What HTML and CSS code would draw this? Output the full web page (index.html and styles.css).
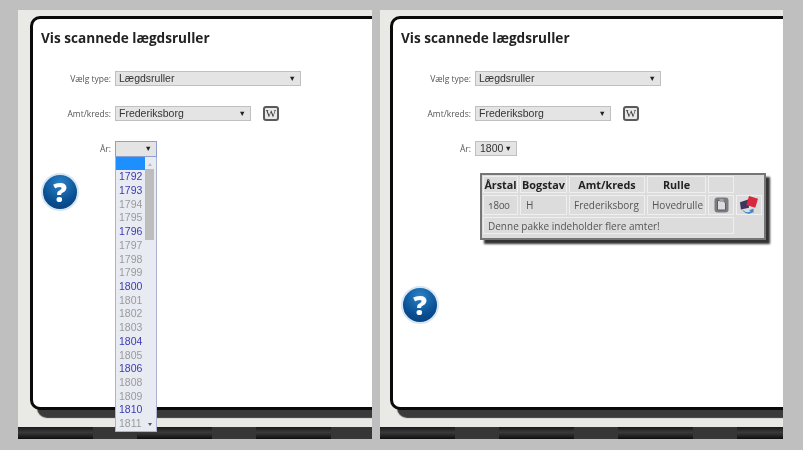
FILE: index.html
```html
<!DOCTYPE html>
<html lang="da">
<head>
    <meta charset="UTF-8">
    <meta name="viewport" content="width=device-width, initial-scale=1.0">
    <title>Vis scannede lægdsruller</title>
    <link rel="stylesheet" href="styles.css">
</head>
<body>
    <div class="panel panel-left">
        <div class="card">
            <h1>Vis scannede lægdsruller</h1>
            <div class="form-row">
                <label>Vælg type:</label>
                <div class="select select-type">Lægdsruller<span class="arrow">▼</span></div>
            </div>
            <div class="form-row">
                <label>Amt/kreds:</label>
                <div class="select select-amt">Frederiksborg<span class="arrow">▼</span></div>
                <span class="wiki">W</span>
            </div>
            <div class="form-row">
                <label>År:</label>
                <div class="select select-year open">
                    <span class="arrow">▼</span>
                    <div class="year-list">
                        <div class="years">
                            <div class="year selected">&nbsp;</div>
                            <div class="year has">1792</div>
                            <div class="year has">1793</div>
                            <div class="year">1794</div>
                            <div class="year">1795</div>
                            <div class="year has">1796</div>
                            <div class="year">1797</div>
                            <div class="year">1798</div>
                            <div class="year">1799</div>
                            <div class="year has">1800</div>
                            <div class="year">1801</div>
                            <div class="year">1802</div>
                            <div class="year">1803</div>
                            <div class="year has">1804</div>
                            <div class="year">1805</div>
                            <div class="year has">1806</div>
                            <div class="year">1808</div>
                            <div class="year">1809</div>
                            <div class="year has">1810</div>
                            <div class="year">1811</div>
                        </div>
                        <div class="scrollbar">
                            <span class="scroll-up"></span>
                            <span class="scroll-thumb"></span>
                            <span class="scroll-down"></span>
                        </div>
                    </div>
                </div>
            </div>
            <div class="help help-left">?</div>
        </div>
        <div class="footer"></div>
    </div>

    <div class="panel panel-right">
        <div class="card">
            <h1>Vis scannede lægdsruller</h1>
            <div class="form-row">
                <label>Vælg type:</label>
                <div class="select select-type">Lægdsruller<span class="arrow">▼</span></div>
            </div>
            <div class="form-row">
                <label>Amt/kreds:</label>
                <div class="select select-amt">Frederiksborg<span class="arrow">▼</span></div>
                <span class="wiki">W</span>
            </div>
            <div class="form-row">
                <label>År:</label>
                <div class="select select-year">1800<span class="arrow">▼</span></div>
            </div>
            <div class="result">
                <table>
                    <tr>
                        <th class="col-year">Årstal</th>
                        <th class="col-letter">Bogstav</th>
                        <th class="col-amt">Amt/kreds</th>
                        <th class="col-roll">Rulle</th>
                        <th class="col-doc"></th>
                        <th class="col-pack"></th>
                    </tr>
                    <tr>
                        <td class="oldstyle">1800</td>
                        <td class="letter">H</td>
                        <td>Frederiksborg</td>
                        <td class="roll">Hovedrulle</td>
                        <td class="icon-cell">
                            <svg width="15" height="16" viewBox="0 0 15 16">
                                <rect x="0.5" y="0.5" width="14" height="15" rx="3" fill="#7b7b80"/>
                                <path d="M3.5 3.5h5.5l2.5 2.5v7h-8z" fill="#dcdce0" stroke="#5c5c62"/>
                                <path d="M5.5 2h4v3h-4z" fill="#a4a4a8"/>
                            </svg>
                        </td>
                        <td class="icon-cell">
                            <svg width="20" height="18" viewBox="0 0 22 20">
                                <path d="M1 7l9-3 1 9-9 2z" fill="#3c3560"/>
                                <path d="M11 0l10 3-3 10-10-3z" fill="#d8283c"/>
                                <path d="M3 14c2 4 7 5 10 3l-2-1 5-2 0 5-1-1c-4 3-10 2-12-4z" fill="#3f86c8"/>
                            </svg>
                        </td>
                    </tr>
                    <tr>
                        <td class="note" colspan="5">Denne pakke indeholder flere amter!</td>
                    </tr>
                </table>
            </div>
            <div class="help">?</div>
        </div>
        <div class="footer"></div>
    </div>
</body>
</html>
```

FILE: styles.css
```css
body {
    margin: 0;
    padding: 10px 18px;
    height: 450px;
    box-sizing: border-box;
    overflow: hidden;
    background-color: #bfbfbf;
    font-family: "Open Sans", sans-serif;
    display: flex;
    gap: 8px;
}
.panel {
    height: 429px;
    box-sizing: border-box;
    padding-top: 6px;
    background-color: #e9e9e5;
    overflow: hidden;
    display: flex;
    flex-direction: column;
    filter: blur(0.35px);
}
.panel-left {
    width: 354px;
    padding-left: 12px;
}
.panel-right {
    width: 403px;
    padding-left: 10px;
}
.card {
    height: 394px;
    flex: none;
    margin-right: -30px;
    box-sizing: border-box;
    padding: 8px 0 0 8px;
    background-color: white;
    border: 3px solid #0a0a0a;
    border-radius: 10px;
    box-shadow: 7px 8px 1px #3a3a3a;
}
h1 {
    margin: 0 0 22px;
    font-size: 13.6px;
    line-height: 22px;
    font-weight: 700;
    color: #222;
}
.form-row {
    display: flex;
    align-items: center;
    height: 15px;
    margin-bottom: 20px;
    margin-left: -8px;
}
label {
    width: 78px;
    margin-right: 4px;
    text-align: right;
    font-size: 8.5px;
    color: #555;
}
.select {
    position: relative;
    height: 15px;
    box-sizing: border-box;
    padding: 0 4px 0 3px;
    background-color: #e4e4e4;
    border: 1px solid #c0c0c0;
    font-family: "Liberation Sans", sans-serif;
    font-size: 10.5px;
    line-height: 13px;
    color: #333;
    display: flex;
    justify-content: space-between;
    align-items: center;
}
.select-type {
    width: 186px;
}
.select-amt {
    width: 136px;
}
.select-year {
    width: 42px;
    padding-left: 4px;
}
.select-year.open {
    height: 16px;
    justify-content: flex-end;
    border-color: #8d9fd0;
}
.arrow {
    font-size: 7.5px;
    color: #222;
}
.wiki {
    width: 16px;
    height: 15px;
    margin-left: 12px;
    box-sizing: border-box;
    border: 2px solid #5a5a5a;
    border-radius: 3px;
    background-color: #e8e8e8;
    font-family: "Liberation Serif", serif;
    font-size: 11px;
    line-height: 11px;
    text-align: center;
    color: #333;
}
.year-list {
    position: absolute;
    top: 15px;
    left: -1px;
    width: 42px;
    height: 275px;
    box-sizing: border-box;
    background-color: #e9ebf3;
    border: 1px solid #aab2cc;
    border-top: none;
    display: flex;
    z-index: 2;
}
.years {
    width: 29px;
    flex: none;
}
.year {
    height: 13.72px;
    line-height: 13.72px;
    padding-left: 3px;
    font-size: 10.5px;
    color: #9a9a9a;
}
.year.has {
    color: #3b3bb0;
}
.year.selected {
    background-color: #1e8fff;
}
.scrollbar {
    flex: 1;
    position: relative;
    margin-right: 2px;
}
.scroll-up, .scroll-down {
    position: absolute;
    left: 3px;
    border-left: 2.5px solid transparent;
    border-right: 2.5px solid transparent;
}
.scroll-up {
    top: 6px;
    border-bottom: 3px solid #bbb;
}
.scroll-down {
    bottom: 5px;
    border-top: 3px solid #555;
}
.scroll-thumb {
    position: absolute;
    top: 12px;
    left: 0;
    right: 0;
    height: 71px;
    background-color: #bdbdbd;
}
.result {
    width: 286px;
    height: 67px;
    margin: -3px 0 46px 79px;
    box-sizing: border-box;
    background-color: #dcdcdc;
    border: 2px solid #767676;
    box-shadow: 4px 4px 2px #333;
}
table {
    border-collapse: separate;
    border-spacing: 2px;
    table-layout: fixed;
    width: 283px;
    margin: -1px 0 0 -1px;
    font-family: "Open Sans", sans-serif;
    font-size: 10px;
    color: #555;
}
th, td {
    box-sizing: border-box;
    border: 1px solid #efefef;
    padding: 0;
    background-color: #dcdcdc;
    white-space: nowrap;
    line-height: 12px;
}
th {
    height: 17px;
    font-size: 10.8px;
    font-weight: 700;
    color: #222;
    text-align: center;
}
td {
    height: 20px;
    padding-left: 4px;
}
.col-year { width: 35px; }
.col-letter { width: 47px; }
.col-amt { width: 76px; }
.col-roll { width: 59px; }
.col-doc { width: 26px; }
.col-pack {
    width: 26px;
    border-color: transparent;
}
.oldstyle {
    font-variant-numeric: oldstyle-nums;
}
.letter {
    padding-left: 5px;
}
.icon-cell {
    padding: 0;
}
.icon-cell svg {
    display: block;
    margin: 0 auto;
}
td.note {
    height: 17px;
}
.help {
    width: 38px;
    height: 38px;
    box-sizing: border-box;
    border: 2px solid #d7e6f4;
    border-radius: 50%;
    background: radial-gradient(circle at 50% 25%, #2b83c8, #0a4f93 60%, #093b72);
    color: white;
    font-family: "Open Sans", sans-serif;
    font-size: 27px;
    font-weight: 800;
    line-height: 33px;
    text-align: center;
}
.help-left {
    margin-top: -3px;
}
.footer {
    height: 12px;
    margin-top: 17px;
    margin-left: -12px;
    flex: none;
    background-image:
        linear-gradient(90deg, transparent 75px, #363636 75px),
        linear-gradient(#1a1a1a, #3a3a3a 45%, #0e0e0e);
    background-size: 119px 100%, 100% 100%;
}
.panel-right .footer {
    margin-left: -10px;
}
```
